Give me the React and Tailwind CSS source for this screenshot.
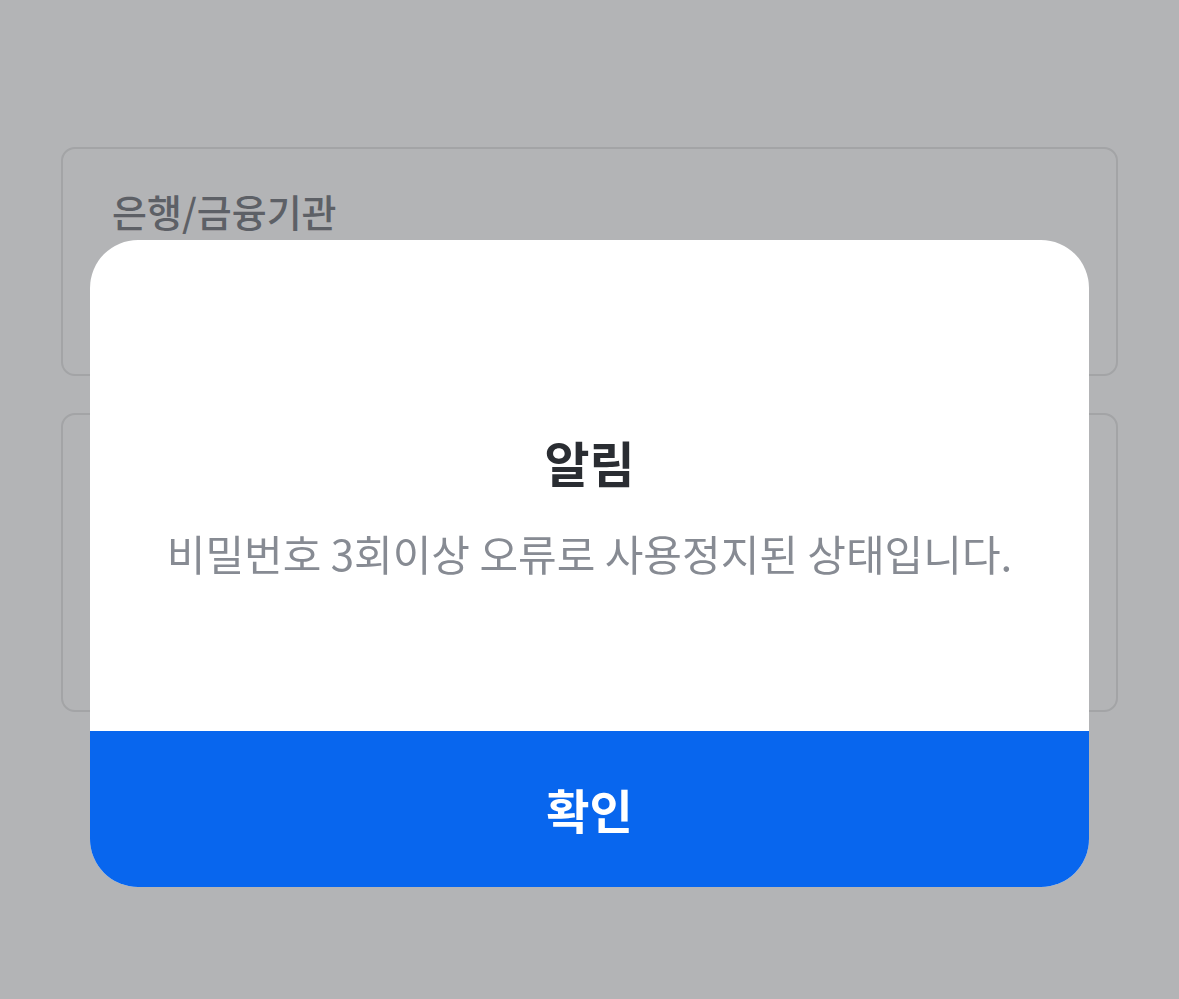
import React from 'react';

const font = { fontFamily: '"Noto Sans CJK KR", "Noto Sans", sans-serif' };

function FieldCard({ label, className }) {
  return (
    <div className={`rounded-[14px] border-2 border-[#a3a4a6] ${className}`}>
      {label && (
        <div className="pl-[49px] pt-[38px] text-[38px] leading-[48px] font-medium text-[#5d6066]">{label}</div>
      )}
    </div>
  );
}

function AlertDialog({ title, message, confirm }) {
  return (
    <div className="fixed inset-0 flex justify-center pt-[240px]">
      <div className="w-[999px] h-[647px] rounded-[48px] bg-white overflow-hidden flex flex-col">
        <div className="flex-1 flex flex-col items-center pt-[194px]">
          <h2 className="text-[49px] leading-[56px] font-bold text-[#2a2d32]">{title}</h2>
          <p className="mt-[38px] text-[42px] leading-[50px] text-[#878b93]">{message}</p>
        </div>
        <button className="h-[156px] w-full bg-[#0866ee] text-white text-[47px] font-bold">{confirm}</button>
      </div>
    </div>
  );
}

export default function App() {
  return (
    <div style={font} className="min-h-[999px] bg-[#b3b4b6] px-[61px] pt-[147px]">
      <div className="flex flex-col gap-[37px]">
        <FieldCard label="은행/금융기관" className="h-[229px]" />
        <FieldCard className="h-[299px]" />
      </div>
      <AlertDialog
        title="알림"
        message="비밀번호 3회이상 오류로 사용정지된 상태입니다."
        confirm="확인"
      />
    </div>
  );
}
